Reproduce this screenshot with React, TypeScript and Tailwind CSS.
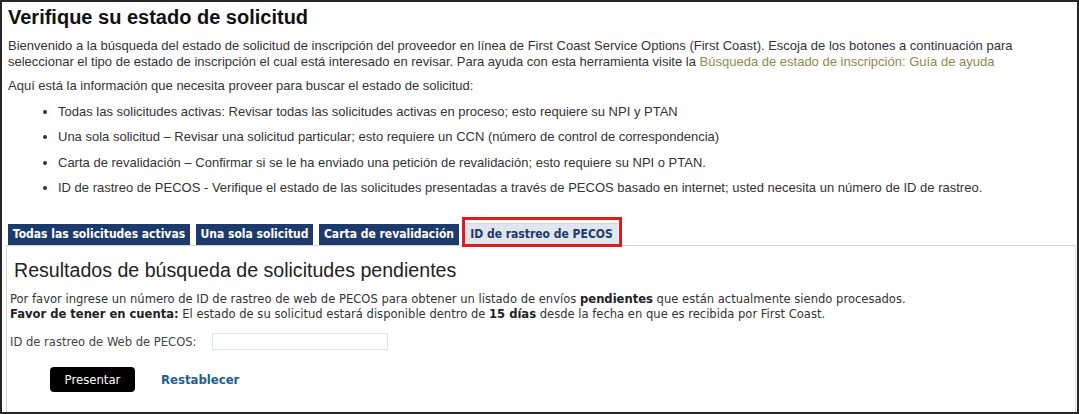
import React from "react";

const arial = { fontFamily: '"Liberation Sans", Arial, sans-serif' };
const tahoma = { fontFamily: '"DejaVu Sans Condensed", "DejaVu Sans", Verdana, sans-serif' };

const items = [
  "Todas las solicitudes activas: Revisar todas las solicitudes activas en proceso; esto requiere su NPI y PTAN",
  "Una sola solicitud – Revisar una solicitud particular; esto requiere un CCN (número de control de correspondencia)",
  "Carta de revalidación – Confirmar si se le ha enviado una petición de revalidación; esto requiere su NPI o PTAN.",
  "ID de rastreo de PECOS - Verifique el estado de las solicitudes presentadas a través de PECOS basado en internet; usted necesita un número de ID de rastreo.",
];

const tabs = [
  { label: "Todas las solicitudes activas", w: "w-[182px]" },
  { label: "Una sola solicitud", w: "w-[117px]" },
  { label: "Carta de revalidación", w: "w-[140px]" },
];

export default function App() {
  return (
    <div className="w-[1079px] h-[414px] border-2 border-[#262626] bg-white overflow-hidden text-[#333]">
      <div className="pl-[6px]" style={arial}>
        <h1 className="mt-[3px] text-[20px] leading-[24px] font-bold text-[#111]">
          Verifique su estado de solicitud
        </h1>
        <p className="mt-[9px] text-[13px] leading-[16px] pr-[24px]">
          <span>
            Bienvenido a la búsqueda del estado de solicitud de inscripción del proveedor en línea de First Coast
            Service Options (First Coast). Escoja de los botones a continuación para seleccionar el tipo de estado de
            inscripción el cual está interesado en revisar. Para ayuda con esta herramienta visite la{" "}
          </span>
          <a className="text-[#8c8c4a]">Búsqueda de estado de inscripción: Guía de ayuda</a>
        </p>
        <p className="mt-[8px] text-[13px] leading-[16px]">
          Aquí está la información que necesita proveer para buscar el estado de solicitud:
        </p>
        <ul className="mt-[10px] list-disc pl-[50px] text-[13px] leading-[16px]">
          {items.map((t) => (
            <li key={t} className="mb-[9.4px]">
              {t}
            </li>
          ))}
        </ul>
      </div>

      <div className="ml-[4px] mr-[1px] mt-[26px]">
        <div className="flex items-end gap-[6px] pl-[2px] h-[23px]">
          {tabs.map((t) => (
            <div
              key={t.label}
              className={`${t.w} h-[21px] bg-[#1d3a6c] text-white text-[12px] font-bold leading-[21px] text-center`}
              style={tahoma}
            >
              {t.label}
            </div>
          ))}
          <div className="relative w-[153px] h-[21px] mb-[1px]">
            <div
              className="h-full bg-[#e1e6ee] text-[#1d3a6c] text-[12px] font-bold leading-[21px] text-center border-t border-[#cfd6e0]"
              style={tahoma}
            >
              ID de rastreo de PECOS
            </div>
            <div className="absolute -left-[3px] -right-[4px] -top-[6px] -bottom-[3px] border-[3px] border-[#e3191c]" />
          </div>
        </div>
        <div className="h-[170px] border border-[#d6d6d6] border-b-0 px-[3px]">
          <h2 className="mt-[12px] pl-[4px] text-[19.6px] leading-[24px] text-[#222]" style={arial}>
            Resultados de búsqueda de solicitudes pendientes
          </h2>
          <div className="mt-[9px] text-[12.85px] leading-[15px] text-[#333]" style={tahoma}>
            <p>
              Por favor ingrese un número de ID de rastreo de web de PECOS para obtener un listado de envíos{" "}
              <b className="text-[#222]">pendientes</b> que están actualmente siendo procesados.
            </p>
            <p>
              <b className="text-[#222]">Favor de tener en cuenta:</b> El estado de su solicitud estará disponible
              dentro de <b className="text-[#222]">15 días</b> desde la fecha en que es recibida por First Coast.
            </p>
            <div className="mt-[12px] flex items-center gap-[16px]">
              <span className="text-[#444]">ID de rastreo de Web de PECOS:</span>
              <input className="w-[176px] h-[17px] border border-[#dde3ea] bg-white outline-none" />
            </div>
            <div className="mt-[17px] ml-[40px] flex items-center gap-[26px]">
              <button
                className="w-[85px] h-[25px] rounded-[4px] bg-black text-white text-[13px]"
                style={tahoma}
              >
                Presentar
              </button>
              <a className="text-[13px] font-bold text-[#1f5e90]">Restablecer</a>
            </div>
          </div>
        </div>
      </div>
    </div>
  );
}
